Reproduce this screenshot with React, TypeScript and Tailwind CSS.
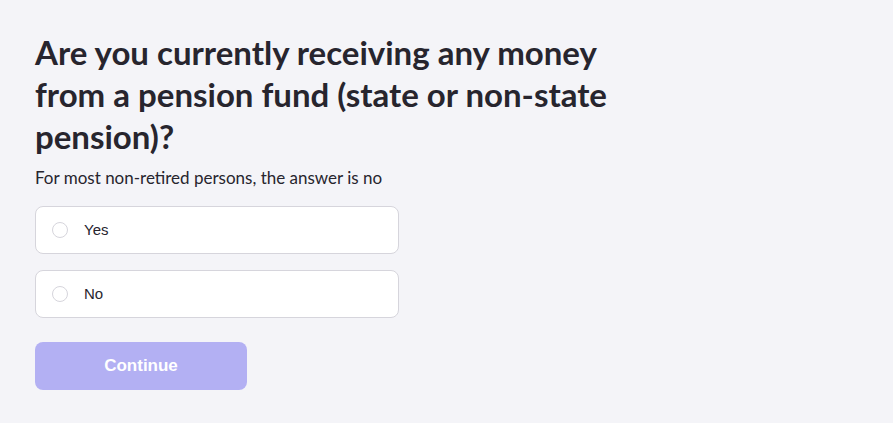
import React, {useState} from 'react';

const options = [
  {label: 'Yes', id: 1},
  {label: 'No', id: 2},
]

const App = () => {
  const [selected, setSelected] = useState<number | null>(null)

  return (
    <div className="min-h-[423px] bg-[#f4f4f8] font-['Lato',sans-serif]">
      <div className="px-[35px] pt-[31px]">
        <h1 className="w-[600px] text-[33px] leading-[42px] font-bold text-[#27252e]">
          Are you currently receiving any money from a pension fund (state or non-state pension)?
        </h1>
        <p className="mt-[9px] text-[17px] leading-6 text-[#27252e]">
          For most non-retired persons, the answer is no
        </p>
        <div className="mt-4 flex w-[364px] flex-col gap-4">
          {options.map(item => (
            <button
              key={item.id}
              onClick={() => setSelected(item.id)}
              className="flex h-12 items-center gap-4 rounded-lg border border-[#d6d5dc] bg-white px-4 text-left"
            >
              <span className="block h-4 w-4 shrink-0 rounded-full border border-[#d6d5dc]" />
              <span className="font-['Liberation_Sans',Arial,sans-serif] text-[15px] text-[#27252e]">
                {item.label}
              </span>
            </button>
          ))}
        </div>
        <button
          disabled={selected === null}
          className="mt-6 h-12 w-[212px] rounded-lg bg-[#b3b0f3] font-['Liberation_Sans',Arial,sans-serif] text-[17px] font-bold text-white"
        >
          Continue
        </button>
      </div>
    </div>
  );
};

export default App;
